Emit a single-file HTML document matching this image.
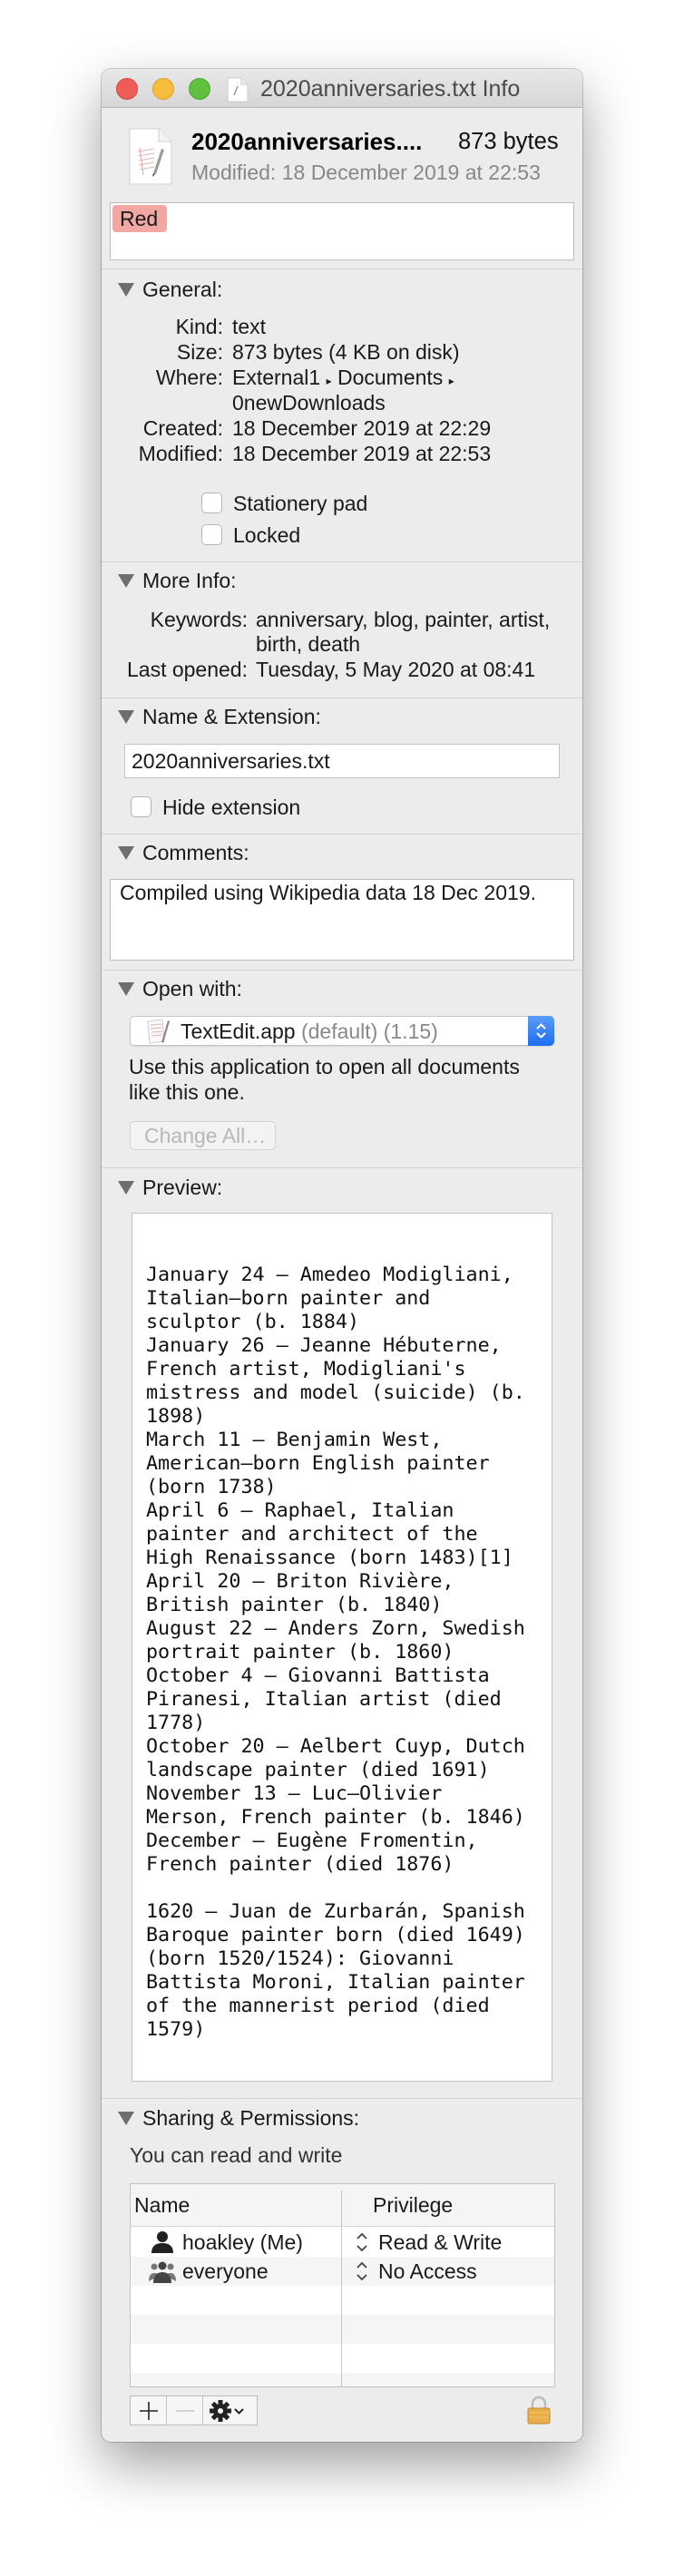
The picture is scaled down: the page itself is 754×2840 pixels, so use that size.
<!DOCTYPE html>
<html><head><meta charset="utf-8">
<style>
*{margin:0;padding:0;box-sizing:border-box}
body{width:754px;height:2840px;background:#fff;position:relative;overflow:hidden;font-family:"Liberation Sans",Arial,sans-serif;color:#1a1a1a}
.win{position:absolute;left:112px;top:76px;width:530px;height:2616px;background:#ececec;border-radius:10px;box-shadow:0 25px 60px rgba(0,0,0,.38),0 0 0 1px rgba(0,0,0,.18);overflow:hidden}
.a{position:absolute;white-space:nowrap}
.t{font-size:23px;line-height:28px;height:28px}
.sep{position:absolute;left:112px;width:530px;height:1px;background:#d3d3d3}
.tri{position:absolute;width:0;height:0;border-left:9px solid transparent;border-right:9px solid transparent;border-top:15px solid #6e6e6e}
.cb{position:absolute;width:23px;height:23px;background:#fff;border:1px solid #b5b5b5;border-radius:5px}
.lbl{text-align:right}
.box{position:absolute;background:#fff;border:1px solid #c4c4c4}
.mono{font-family:"DejaVu Sans Mono","Liberation Mono",monospace;font-size:21.7px;line-height:26px;white-space:pre;color:#111}
</style></head><body>
<div class="win">
  <div style="position:absolute;left:0;top:0;width:530px;height:43px;background:linear-gradient(#e8e8e8,#d6d6d6);border-bottom:1px solid #b9b9b9"></div>
</div>
<div class="a" style="left:128px;top:86px;width:24px;height:24px;border-radius:50%;background:#ee5c57;border:1px solid #d9453f"></div>
<div class="a" style="left:168px;top:86px;width:24px;height:24px;border-radius:50%;background:#f5bd3b;border:1px solid #dca12b"></div>
<div class="a" style="left:208px;top:86px;width:24px;height:24px;border-radius:50%;background:#5fc13e;border:1px solid #48a52c"></div>
<svg class="a" style="left:250px;top:85px" width="24" height="28" viewBox="0 0 24 28"><path d="M1 1h15l7 7v19H1z" fill="#fff" stroke="#ccc"/><path d="M16 1v7h7" fill="#eee" stroke="#ccc"/><path d="M8 20l4-10" stroke="#999" stroke-width="1.5"/></svg>
<div class="a" style="left:287px;top:82px;font-size:25px;line-height:32px;color:#4a4a4a">2020anniversaries.txt Info</div>

<svg class="a" style="left:142px;top:141px" width="48" height="63" viewBox="0 0 48 63"><path d="M1 1h32l14 14v47H1z" fill="#fff" stroke="#d0d0d0"/><path d="M33 1v14h14" fill="#f2f2f2" stroke="#d0d0d0"/><g stroke="#e3b4b4" stroke-width="1"><path d="M10 26l18 -3M10 31l18-3M11 36l17-3M11 41l17-3M12 46l16-3"/></g><path d="M12 22l4 30" stroke="#e8a0a0"/><path d="M27 50l9-27 3 1-9 27z" fill="#9a9a9a"/><path d="M27 50l-1 4 3-3z" fill="#333"/></svg>
<div class="a" style="left:211px;top:139px;font-size:26px;line-height:34px;font-weight:bold;color:#000">2020anniversaries....</div>
<div class="a" style="left:505px;top:139px;font-size:25.5px;line-height:34px;color:#111">873 bytes</div>
<div class="a" style="left:211px;top:176px;font-size:23px;line-height:28px;color:#888">Modified: 18 December 2019 at 22:53</div>
<div class="box" style="left:121px;top:223px;width:512px;height:64px;border-color:#bdbdbd"></div>
<div class="a" style="left:124px;top:226px;width:60px;height:30px;border-radius:4px;background:#f2a7a3"></div>
<div class="a t" style="left:132px;top:227px">Red</div>

<div class="sep" style="top:296px"></div>
<div class="tri" style="left:130px;top:312px"></div>
<div class="a t" style="left:157px;top:305px">General:</div>
<div class="a t lbl" style="left:66px;width:180px;top:346px">Kind:</div><div class="a t" style="left:256px;top:346px">text</div>
<div class="a t lbl" style="left:66px;width:180px;top:374px">Size:</div><div class="a t" style="left:256px;top:374px">873 bytes (4 KB on disk)</div>
<div class="a t lbl" style="left:66px;width:180px;top:402px">Where:</div><div class="a t" style="left:256px;top:402px">External1 <span style="font-size:12px">▸</span> Documents <span style="font-size:12px">▸</span></div>
<div class="a t" style="left:256px;top:430px">0newDownloads</div>
<div class="a t lbl" style="left:66px;width:180px;top:458px">Created:</div><div class="a t" style="left:256px;top:458px">18 December 2019 at 22:29</div>
<div class="a t lbl" style="left:66px;width:180px;top:486px">Modified:</div><div class="a t" style="left:256px;top:486px">18 December 2019 at 22:53</div>
<div class="cb" style="left:222px;top:543px"></div><div class="a t" style="left:257px;top:541px">Stationery pad</div>
<div class="cb" style="left:222px;top:578px"></div><div class="a t" style="left:257px;top:576px">Locked</div>

<div class="sep" style="top:619px"></div>
<div class="tri" style="left:130px;top:633px"></div>
<div class="a t" style="left:157px;top:626px">More Info:</div>
<div class="a t lbl" style="left:83px;width:190px;top:669px">Keywords:</div><div class="a t" style="left:282px;top:669px">anniversary, blog, painter, artist,</div>
<div class="a t" style="left:282px;top:696px">birth, death</div>
<div class="a t lbl" style="left:83px;width:190px;top:724px">Last opened:</div><div class="a t" style="left:282px;top:724px">Tuesday, 5 May 2020 at 08:41</div>

<div class="sep" style="top:769px"></div>
<div class="tri" style="left:130px;top:783px"></div>
<div class="a t" style="left:157px;top:776px">Name &amp; Extension:</div>
<div class="box" style="left:137px;top:820px;width:480px;height:38px"></div>
<div class="a t" style="left:145px;top:825px">2020anniversaries.txt</div>
<div class="cb" style="left:144px;top:878px"></div><div class="a t" style="left:179px;top:876px">Hide extension</div>

<div class="sep" style="top:919px"></div>
<div class="tri" style="left:130px;top:933px"></div>
<div class="a t" style="left:157px;top:926px">Comments:</div>
<div class="box" style="left:121px;top:969px;width:512px;height:90px;border-color:#bdbdbd"></div>
<div class="a t" style="left:132px;top:970px">Compiled using Wikipedia data 18 Dec 2019.</div>

<div class="sep" style="top:1069px"></div>
<div class="tri" style="left:130px;top:1083px"></div>
<div class="a t" style="left:157px;top:1076px">Open with:</div>
<div class="a" style="left:143px;top:1120px;width:468px;height:33px;background:#fff;border:1px solid #c6c6c6;border-radius:5px;box-shadow:0 1px 1px rgba(0,0,0,.1)"></div>
<div class="a" style="left:582px;top:1120px;width:29px;height:33px;background:linear-gradient(#5a9cf7,#1e6ef0);border-radius:0 5px 5px 0"></div>
<svg class="a" style="left:588px;top:1125px" width="17" height="23" viewBox="0 0 17 23"><path d="M4 9l4.5-4.5L13 9M4 14l4.5 4.5L13 14" fill="none" stroke="#fff" stroke-width="2"/></svg>
<svg class="a" style="left:161px;top:1122px" width="28" height="30" viewBox="0 0 28 30"><path d="M2 4l16-2 2 24-16 2z" fill="#fafafa" stroke="#ccc"/><path d="M5 8l12-1M5 12l12-1M6 16l12-1M6 20l12-1" stroke="#e0b0b0"/><path d="M17 27l7-24 2 1-7 24z" fill="#888"/></svg>
<div class="a t" style="left:199px;top:1123px">TextEdit.app <span style="color:#888">(default) (1.15)</span></div>
<div class="a t" style="left:142px;top:1162px">Use this application to open all documents</div>
<div class="a t" style="left:142px;top:1190px">like this one.</div>
<div class="a" style="left:143px;top:1236px;width:161px;height:32px;background:#f3f3f3;border:1px solid #d3d3d3;border-radius:5px"></div>
<div class="a t" style="left:159px;top:1238px;color:#b8b8b8">Change All…</div>

<div class="sep" style="top:1287px"></div>
<div class="tri" style="left:130px;top:1302px"></div>
<div class="a t" style="left:157px;top:1295px">Preview:</div>
<div class="box" style="left:145px;top:1337px;width:464px;height:958px;border-color:#c2c2c2"></div>
<div class="a mono" style="left:161px;top:1393px">January 24 – Amedeo Modigliani,
Italian–born painter and
sculptor (b. 1884)
January 26 – Jeanne Hébuterne,
French artist, Modigliani's
mistress and model (suicide) (b.
1898)
March 11 – Benjamin West,
American–born English painter
(born 1738)
April 6 – Raphael, Italian
painter and architect of the
High Renaissance (born 1483)[1]
April 20 – Briton Rivière,
British painter (b. 1840)
August 22 – Anders Zorn, Swedish
portrait painter (b. 1860)
October 4 – Giovanni Battista
Piranesi, Italian artist (died
1778)
October 20 – Aelbert Cuyp, Dutch
landscape painter (died 1691)
November 13 – Luc–Olivier
Merson, French painter (b. 1846)
December – Eugène Fromentin,
French painter (died 1876)

1620 – Juan de Zurbarán, Spanish
Baroque painter born (died 1649)
(born 1520/1524): Giovanni
Battista Moroni, Italian painter
of the mannerist period (died
1579)</div>

<div class="sep" style="top:2313px"></div>
<div class="tri" style="left:130px;top:2328px"></div>
<div class="a t" style="left:157px;top:2321px">Sharing &amp; Permissions:</div>
<div class="a t" style="left:143px;top:2362px;color:#333">You can read and write</div>
<div class="a" style="left:143px;top:2407px;width:469px;height:225px;background:#fff;border:1px solid #c2c2c2"></div>
<div class="a" style="left:144px;top:2408px;width:467px;height:47px;background:#f5f5f5;border-bottom:1px solid #d6d6d6"></div>
<div class="a" style="left:144px;top:2488px;width:467px;height:32px;background:#f4f5f5"></div>
<div class="a" style="left:144px;top:2552px;width:467px;height:32px;background:#f4f5f5"></div>
<div class="a" style="left:144px;top:2616px;width:467px;height:15px;background:#f4f5f5"></div>
<div class="a" style="left:376px;top:2415px;width:1px;height:216px;background:#c8c8c8"></div>
<div class="a t" style="left:148px;top:2417px">Name</div>
<div class="a t" style="left:411px;top:2417px">Privilege</div>
<svg class="a" style="left:166px;top:2459px" width="26" height="26" viewBox="0 0 26 26"><circle cx="13" cy="7" r="6" fill="#222"/><path d="M1 25c0-8 5-11 12-11s12 3 12 11z" fill="#222"/></svg>
<div class="a t" style="left:201px;top:2458px">hoakley (Me)</div>
<svg class="a" style="left:164px;top:2493px" width="30" height="24" viewBox="0 0 30 24"><circle cx="6" cy="6" r="3.5" fill="#777"/><circle cx="24" cy="6" r="3.5" fill="#777"/><circle cx="15" cy="5" r="4.5" fill="#444"/><path d="M0 22c0-7 3-9 6-9s5 1 6 3z" fill="#777"/><path d="M30 22c0-7-3-9-6-9s-5 1-6 3z" fill="#777"/><path d="M5 24c0-8 4-12 10-12s10 4 10 12z" fill="#444"/></svg>
<div class="a t" style="left:201px;top:2490px">everyone</div>
<svg class="a" style="left:391px;top:2459px" width="16" height="26" viewBox="0 0 16 26"><path d="M3 9l5-5 5 5M3 17l5 5 5-5" fill="none" stroke="#444" stroke-width="1.8"/></svg>
<svg class="a" style="left:391px;top:2491px" width="16" height="26" viewBox="0 0 16 26"><path d="M3 9l5-5 5 5M3 17l5 5 5-5" fill="none" stroke="#444" stroke-width="1.8"/></svg>
<div class="a t" style="left:417px;top:2458px">Read &amp; Write</div>
<div class="a t" style="left:417px;top:2490px">No Access</div>

<div class="a" style="left:143px;top:2641px;width:141px;height:33px;background:#f6f6f6;border:1px solid #bcbcbc"></div>
<div class="a" style="left:183px;top:2642px;width:1px;height:31px;background:#c4c4c4"></div>
<div class="a" style="left:223px;top:2642px;width:1px;height:31px;background:#c4c4c4"></div>
<svg class="a" style="left:151px;top:2645px" width="26" height="26" viewBox="0 0 26 26"><path d="M13 3v20M3 13h20" stroke="#222" stroke-width="1.6"/></svg>
<svg class="a" style="left:191px;top:2645px" width="26" height="26" viewBox="0 0 26 26"><path d="M3 13h20" stroke="#c4c4c4" stroke-width="1.6"/></svg>
<svg class="a" style="left:231px;top:2646px" width="48" height="24" viewBox="0 0 48 24"><g transform="translate(12 12)" fill="#222"><circle r="8"/><g id="g"><rect x="-2.5" y="-12" width="5" height="5"/><rect x="-2.5" y="7" width="5" height="5"/><rect x="-12" y="-2.5" width="5" height="5"/><rect x="7" y="-2.5" width="5" height="5"/></g><use href="#g" transform="rotate(45)"/><circle r="3" fill="#f6f6f6"/></g><path d="M28 10l4.5 4.5L37 10" fill="none" stroke="#222" stroke-width="2"/></svg>
<svg class="a" style="left:580px;top:2641px" width="28" height="32" viewBox="0 0 28 32"><path d="M7 14V9a7 7 0 0 1 14 0v5" fill="none" stroke="#bbb" stroke-width="2.5"/><rect x="2" y="14" width="24" height="17" rx="2" fill="#e9ae4a" stroke="#c08a2e"/><path d="M3 19h22M3 24h22" stroke="#f3c46d" stroke-width="1"/></svg>
</body></html>
